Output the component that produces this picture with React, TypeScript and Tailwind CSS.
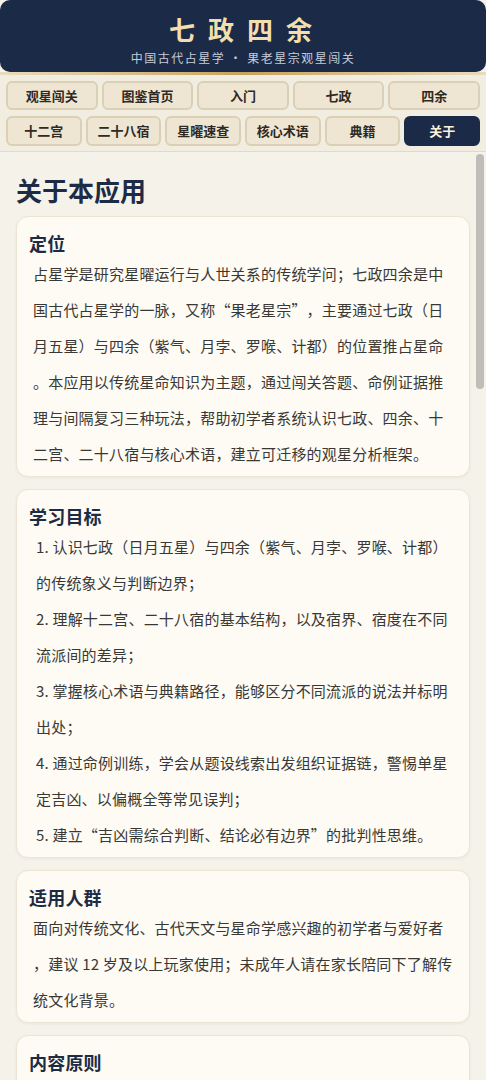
import { useState } from "react";

const topTabs = ["观星闯关", "图鉴首页", "入门", "七政", "四余"];
const bottomTabs = ["十二宫", "二十八宿", "星曜速查", "核心术语", "典籍", "关于"];

// full-width curly quotes, as the reference draws them
function Open() {
  return <span className="inline-block w-[15.2px] text-right">“</span>;
}
function Close() {
  return <span className="inline-block w-[15.2px] text-left">”</span>;
}

const goals: React.ReactNode[] = [
  "1. 认识七政（日月五星）与四余（紫气、月孛、罗喉、计都）的传统象义与判断边界；",
  "2. 理解十二宫、二十八宿的基本结构，以及宿界、宿度在不同流派间的差异；",
  "3. 掌握核心术语与典籍路径，能够区分不同流派的说法并标明出处；",
  "4. 通过命例训练，学会从题设线索出发组织证据链，警惕单星定吉凶、以偏概全等常见误判；",
  <>
    5. 建立<Open />吉凶需综合判断、结论必有边界<Close />的批判性思维。
  </>,
];

function Card({ title, children }: { title: string; children: React.ReactNode }) {
  return (
    <section className="rounded-[12px] border border-[#ebe5d5] bg-[#fdfbf4] px-3 pt-[14px] pb-[4px] shadow-[0_1px_3px_rgba(120,100,60,0.08)]">
      <h3 className="text-[18px] font-bold leading-[24px] text-[#1d2b45]">{title}</h3>
      <div className="mt-[1px]">{children}</div>
    </section>
  );
}

function App() {
  const [active, setActive] = useState("关于");

  const tabClass = (name: string) =>
    `h-full rounded-[6px] border-2 text-[13px] font-bold ${
      active === name
        ? "border-[#1b2a47] bg-[#1b2a47] text-[#fbf3dc]"
        : "border-[#dcd0b4] bg-[#eee6d3] text-[#2f2a24]"
    }`;

  return (
    <div
      className="flex h-screen flex-col overflow-hidden bg-[#f5f2ea]"
      style={{ fontFamily: '"Noto Sans CJK SC", "Noto Sans", sans-serif' }}
    >
      <header className="rounded-[10px] bg-[#1b2a47] pt-[12px] pb-[6px] text-center">
        <h1 className="pl-[0.3em] text-[26px] font-bold leading-[34px] tracking-[0.5em] text-[#f3dfae]">
          七政四余
        </h1>
        <p className="mt-[4px] text-[12px] leading-[16px] tracking-[1.5px] text-[#c6ccd8]">
          中国古代占星学 · 果老星宗观星闯关
        </p>
      </header>
      <div className="h-[3px] bg-linear-to-r from-[#e9dcbc] via-[#c9a25a] to-[#e9dcbc]" />

      <nav className="flex flex-col gap-[6px] border-b border-[#e2d9c6] bg-[#f2ede1] px-[6px] pt-[6px] pb-[5px]">
        <div className="grid h-[29px] grid-cols-5 gap-1">
          {topTabs.map((t) => (
            <button key={t} className={tabClass(t)} onClick={() => setActive(t)}>
              {t}
            </button>
          ))}
        </div>
        <div className="grid h-[30px] grid-cols-6 gap-1">
          {bottomTabs.map((t) => (
            <button key={t} className={tabClass(t)} onClick={() => setActive(t)}>
              {t}
            </button>
          ))}
        </div>
      </nav>

      <main className="relative flex-1 overflow-hidden">
        <div className="px-4 pt-[21px] pb-6">
          <h2 className="mb-[9px] text-[26px] font-bold leading-[34px] text-[#1d2b45]">关于本应用</h2>

          <div className="flex flex-col gap-3 text-[15px] leading-[36px] tracking-[0.2px] text-[#3a3835] [line-break:anywhere]">
            <Card title="定位">
              <p className="px-1">
                占星学是研究星曜运行与人世关系的传统学问；七政四余是中国古代占星学的一脉，又称<Open />果老星宗<Close />，主要通过七政（日月五星）与四余（紫气、月孛、罗喉、计都）的位置推占星命。本应用以传统星命知识为主题，通过闯关答题、命例证据推理与间隔复习三种玩法，帮助初学者系统认识七政、四余、十二宫、二十八宿与核心术语，建立可迁移的观星分析框架。
              </p>
            </Card>

            <Card title="学习目标">
              <ol className="pl-[7px] pr-1">
                {goals.map((g, i) => (
                  <li key={i}>{g}</li>
                ))}
              </ol>
            </Card>

            <Card title="适用人群">
              <p className="px-1">
                面向对传统文化、古代天文与星命学感兴趣的初学者与爱好者，建议 12 岁及以上玩家使用；未成年人请在家长陪同下了解传统文化背景。
              </p>
            </Card>

            <Card title="内容原则">
              <p className="px-1">
                本应用内容整理自《果老星宗》《张果星宗》等传统典籍，仅作为传统文化与古代天文知识的学习参考，不构成任何现实决策建议。不同流派说法并存时，均标明出处与差异。
              </p>
            </Card>

            <Card title="免责声明">
              <p className="px-1">
                星命之学属于传统文化范畴，请理性看待，切勿迷信。本应用不提供任何算命、占卜等付费服务。
              </p>
            </Card>
          </div>
        </div>

        {/* overlay scrollbar */}
        <div className="absolute top-[2px] right-[2px] h-[235px] w-[8px] rounded-full bg-[#bfbdb8]" />
      </main>
    </div>
  );
}

export default App;
